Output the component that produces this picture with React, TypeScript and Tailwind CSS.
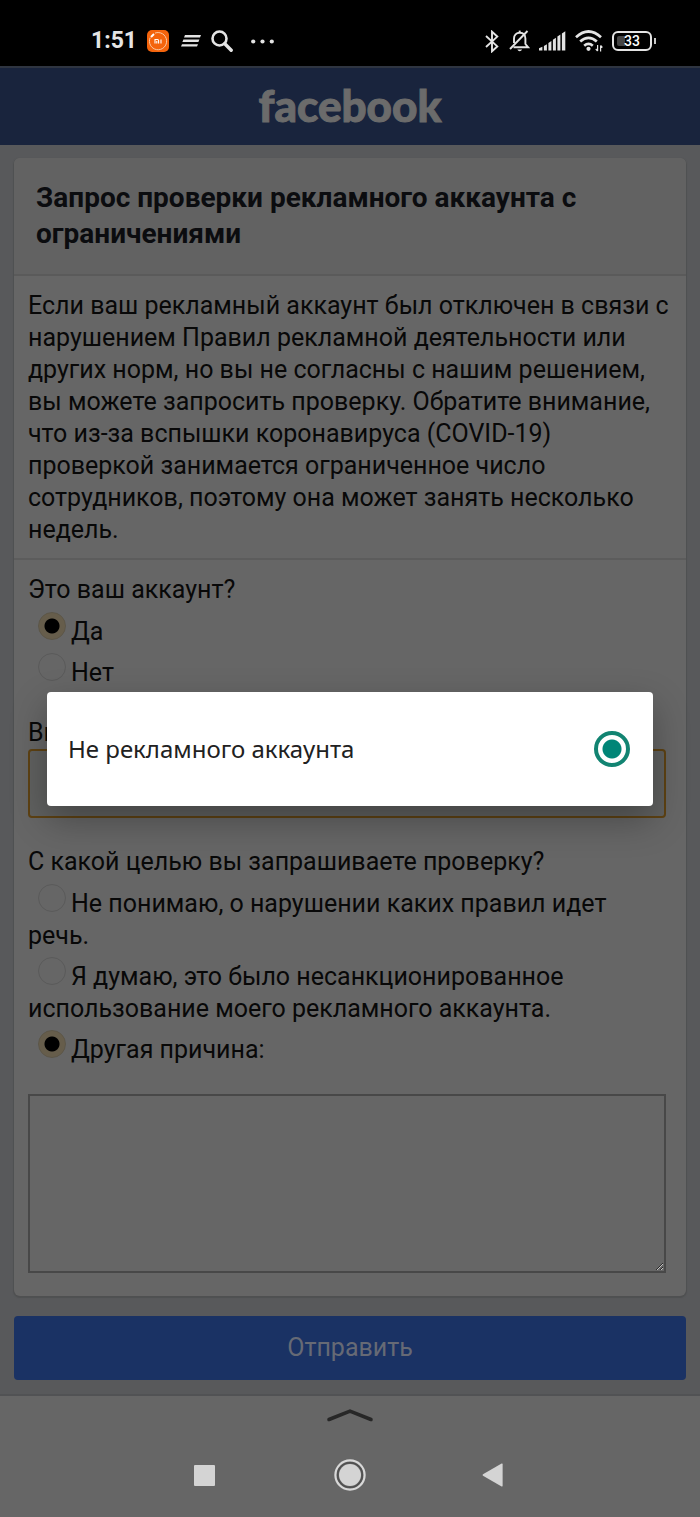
import React, { useState } from "react";

type Option = {
  value: string;
  label: string;
};

const ownerOptions: Option[] = [
  { value: "yes", label: "Да" },
  { value: "no", label: "Нет" },
];

const reasonOptions: Option[] = [
  { value: "unclear", label: "Не понимаю, о нарушении каких правил идет речь." },
  {
    value: "unauthorized",
    label: "Я думаю, это было несанкционированное использование моего рекламного аккаунта.",
  },
  { value: "other", label: "Другая причина:" },
];

const StatusBar: React.FC = () => (
  <div className="flex h-[66px] items-center justify-between bg-black pt-4 pr-11 pl-[91px] text-[#e4e4e4]">
    <div className="flex items-center">
      <span className="text-[23px] font-bold">1:51</span>

      <svg className="ml-2.5" width="22" height="22" viewBox="0 0 22 22" fill="none">
        <rect width="22" height="22" rx="5" fill="#f4640c" />
        <path d="M8 3.1A8.6 8.6 0 1 1 3.2 7.6" stroke="#fbc9a4" strokeWidth="1" />
        <path d="M4 7l3-3" stroke="#fff" strokeWidth="2" />
        <path
          d="M8 13.5v-4h2.6q1 0 1 1v3M9.8 11v2.5M14 9.5v4"
          stroke="#fff"
          strokeWidth="1.1"
        />
      </svg>

      <svg className="ml-3" width="20" height="12" viewBox="0 0 20 12" fill="currentColor">
        <path d="M4 0h16l-1 2.4H3zM2.4 4.6h16l-1 2.4h-16zM1 9.2h16l-1 2.4H0z" />
      </svg>

      <svg className="ml-2.5" width="22" height="22" viewBox="0 0 22 22" fill="none" stroke="currentColor">
        <circle cx="8.5" cy="8.5" r="7" strokeWidth="2.6" />
        <path d="M13.8 13.8l6.4 6.4" strokeWidth="3.4" strokeLinecap="round" />
      </svg>

      <svg className="ml-[18px]" width="23" height="5" viewBox="0 0 23 5" fill="currentColor">
        <circle cx="2.2" cy="2.5" r="2.1" />
        <circle cx="11.5" cy="2.5" r="2.1" />
        <circle cx="20.8" cy="2.5" r="2.1" />
      </svg>
    </div>

    <div className="flex items-center">
      <svg width="14" height="23" viewBox="0 0 14 23" fill="none" stroke="currentColor" strokeWidth="1.9">
        <path d="M1 6l11.3 10.4L7 21.3V1.7l5.3 4.9L1 17" />
      </svg>

      <svg className="ml-2.5" width="21" height="22" viewBox="0 0 21 22" fill="none" stroke="currentColor" strokeWidth="1.9">
        <path d="M5 13V8.5C5 5 7.3 2.800 10.700 2.800S16.400 5 16.400 8.500V14l2.800 3.300H4.500" />
        <path d="M1 19L18.5 1" />
        <path d="M8.3 19.4h4.8q-.8 1.8-2.4 1.8t-2.400-1.800z" fill="currentColor" stroke="none" />
        <path d="M10.7.6v2" />
      </svg>

      <svg className="ml-[9px]" width="27" height="20" viewBox="0 0 27 20" fill="currentColor">
        <path d="M0 19.5v-2.2l3.4-1.5v3.7zM4.9 19.5v-4.6l3-1.6v6.2zM9.4 19.5v-7.6l3-1.8v9.4zM13.9 19.5V8.8l3-2v12.7zM18.4 19.5V5.6l3-2v15.9zM22.9 19.5V2.4l3.4-2.2v19.3z" />
      </svg>

      <svg className="ml-[9px]" width="29" height="22" viewBox="0 0 29 22" fill="none" stroke="currentColor">
        <path d="M1 7.2q12.500-11.400 25 0M5.200 11.600q8.300-7.400 16.600 0M9.200 15.800q4.300-3.700 8.600 0" strokeWidth="2.7" />
        <circle cx="13.5" cy="18.8" r="2.1" fill="currentColor" stroke="none" />
        <path d="M22.6 15v6M22.6 21l-1.800-2M25.600 21.500v-6M25.600 15.500l1.800 2" strokeWidth="1.2" />
      </svg>

      <div className="ml-2 flex h-5 w-10 items-center rounded-md border-2 border-[#e4e4e4] p-[3px]">
        <span className="h-full w-2 rounded-l-xs bg-[#444]" />
        <span className="-ml-2 flex-1 text-center text-sm leading-none font-medium text-white">33</span>
      </div>
      <span className="ml-0.5 h-1.5 w-[2px] bg-[#c8c8c8]" />
    </div>
  </div>
);

const RadioRow: React.FC<{
  name: string;
  option: Option;
  checked: boolean;
  onChange: (value: string) => void;
}> = ({ name, option, checked, onChange }) => (
  <label className="block">
    <input
      type="radio"
      name={name}
      value={option.value}
      checked={checked}
      onChange={() => onChange(option.value)}
      className="mt-[5px] mr-[5px] ml-2.5 inline-block size-7 appearance-none rounded-full border border-[#5a5a5a] checked:border-[#5c5648] checked:bg-[radial-gradient(circle,#000_7px,#665d4b_8px)]"
    />
    {option.label}
  </label>
);

const NavBar: React.FC = () => (
  <footer className="flex flex-1 flex-col items-center border-t-2 border-[#515254] bg-[#666] pt-3 pb-[26px]">
    <button type="button" aria-label="Показать панель">
      <svg width="48" height="14" viewBox="0 0 48 14" fill="none">
        <path
          d="M3 11.5l21-8.3 21 8.3"
          stroke="#272727"
          strokeWidth="3.6"
          strokeLinecap="round"
        />
      </svg>
    </button>

    <div className="mt-auto grid w-full grid-cols-[1fr_32px_1fr] items-center">
      <button type="button" aria-label="Недавние" className="mr-[119px] size-[21px] justify-self-end rounded-[1px] bg-[#d4d4d4]" />
      <button type="button" aria-label="Домой">
        <svg width="32" height="32" viewBox="0 0 32 32" fill="none">
          <circle cx="16" cy="16" r="14.6" stroke="#d8d8d8" strokeWidth="2.2" />
          <circle cx="16" cy="16" r="12.3" stroke="#505050" strokeWidth="1.6" />
          <circle cx="16" cy="16" r="11" fill="#d4d4d4" />
        </svg>
      </button>
      <button type="button" aria-label="Назад" className="ml-[116px] justify-self-start">
        <svg width="21" height="24" viewBox="0 0 21 24" fill="#d4d4d4">
          <path d="M19.6.6q1-.5 1 .6v21.6q0 1.100-1 .6L1 12.800q-1-.8 0-1.500z" />
        </svg>
      </button>
    </div>
  </footer>
);

const App: React.FC = () => {
  const [owner, setOwner] = useState("yes");
  const [reason, setReason] = useState("other");
  const [account, setAccount] = useState("none");
  const [details, setDetails] = useState("");

  return (
    <div className="relative flex min-h-screen flex-col bg-[#58595b] font-[Roboto,sans-serif] text-[25px] leading-8 text-[#080808]">
      <StatusBar />

      <header className="flex h-[79px] items-center justify-center border-t-2 border-[#2f3541] bg-[#19243d] pb-1">
        <span className="font-[Lato,sans-serif] text-[44px] leading-none font-black text-[#6b6b6b] [-webkit-text-stroke:1px_#6b6b6b]">
          facebook
        </span>
      </header>

      <form onSubmit={(e) => e.preventDefault()} className="px-3.5 pt-[13px] pb-3.5">
        <div className="rounded-md bg-[#666] shadow-[0_1px_1px_1px_#4f5051]">
          <h1 className="rounded-t-md border-b-2 border-[#5a5a5a] bg-[#626262] px-[22px] py-[22px] text-[28px] leading-9 font-bold text-[#0b0c0f]">
            Запрос проверки рекламного аккаунта с ограничениями
          </h1>

          <p className="border-b-2 border-[#5c5c5c] px-3.5 pt-3.5 pb-3">
            Если ваш рекламный аккаунт был отключен в связи с нарушением Правил
            рекламной деятельности или других норм, но вы не согласны с нашим
            решением, вы можете запросить проверку. Обратите внимание, что из-за
            вспышки коронавируса (COVID-19) проверкой занимается ограниченное
            число сотрудников, поэтому она может занять несколько недель.
          </p>

          <div className="space-y-7 pt-3.5 pr-5 pb-[23px] pl-3.5">
            <fieldset>
              <legend className="mb-px">Это ваш аккаунт?</legend>
              {ownerOptions.map((option) => (
                <RadioRow
                  key={option.value}
                  name="owner"
                  option={option}
                  checked={owner === option.value}
                  onChange={setOwner}
                />
              ))}
            </fieldset>

            <div>
              <label htmlFor="account" className="block">
                Вы
              </label>
              <select
                id="account"
                value=""
                onChange={(e) => setAccount(e.target.value)}
                className="block h-[69px] w-full appearance-none rounded-sm border-2 border-[#5e4213] bg-[#606160]"
              >
                <option value="" />
              </select>
            </div>

            <fieldset>
              <legend className="mb-px">С какой целью вы запрашиваете проверку?</legend>
              {reasonOptions.map((option) => (
                <RadioRow
                  key={option.value}
                  name="reason"
                  option={option}
                  checked={reason === option.value}
                  onChange={setReason}
                />
              ))}
            </fieldset>

            <textarea
              aria-label="Другая причина"
              value={details}
              onChange={(e) => setDetails(e.target.value)}
              className="block h-[179px] w-full border-2 border-[#484848] bg-[#666] p-2"
            />
          </div>
        </div>

        <button
          type="submit"
          className="mt-5 block h-16 w-full rounded-sm bg-[#1a3264] text-[#666a75]"
        >
          Отправить
        </button>
      </form>

      <NavBar />

      {/* Select picker dialog */}
      <div className="absolute inset-x-0 top-[66px] bottom-[85px] flex items-center px-[47px]">
        <div
          role="dialog"
          className="w-full rounded-sm bg-white px-[21px] py-[39px] shadow-[0_14px_36px_rgba(0,0,0,0.3)]"
        >
          <label className="flex items-center justify-between font-['Noto_Sans',sans-serif] text-2xl text-[#212121]">
            Не рекламного аккаунта
            <input
              type="radio"
              name="account"
              value="none"
              checked={account === "none"}
              onChange={() => setAccount("none")}
              className="mr-0.5 size-9 appearance-none rounded-full border-4 border-[#128472] checked:bg-[radial-gradient(circle,#018577_9px,#fff_10px)]"
            />
          </label>
        </div>
      </div>
    </div>
  );
};

export default App;
